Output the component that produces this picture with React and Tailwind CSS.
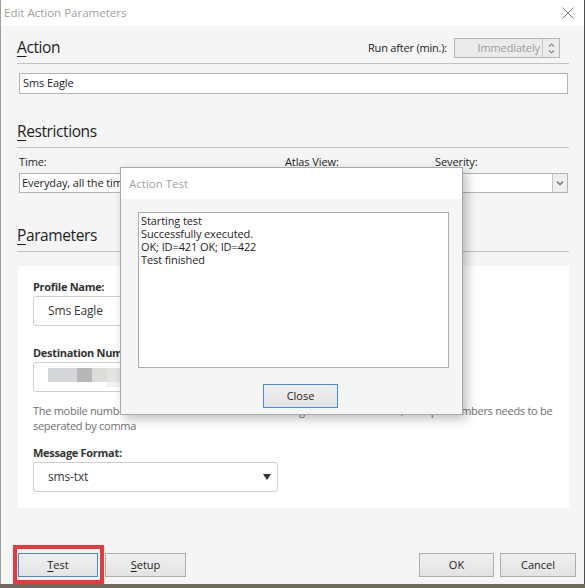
import React from "react";

const font = "font-['Open_Sans','Noto_Sans',sans-serif]";

function Heading({ first, rest, right }) {
  return (
    <div className="flex h-[28px] items-start justify-between border-b border-[#c3c3c3]">
      <div className="text-[15.5px] leading-[22px] tracking-[-0.4px] text-[#1e1e1e]">
        <span className="underline decoration-1 underline-offset-[3px]">{first}</span>
        {rest}
      </div>
      {right}
    </div>
  );
}

function SpinBox() {
  return (
    <div className="mr-[9px] mt-[2px] flex items-center gap-[7px]">
      <span className="text-[11px] leading-[20px] tracking-[-0.2px] text-[#1e1e1e]">Run after (min.):</span>
      <div className="flex h-[20px] w-[106px] border border-[#b5b5b5] bg-[#ebebeb]">
        <div className="flex-1 pr-[2px] text-right text-[11px] leading-[18px] tracking-[-0.1px] text-[#9c9c9c]">Immediately</div>
        <div className="flex w-[17px] flex-col items-center justify-center border-l border-[#c8c8c8]">
          <svg width="7" height="13" viewBox="0 0 7 13" fill="none" stroke="#8a8a8a" strokeWidth="1.2">
            <path d="M1 4.5 L3.5 2 L6 4.5" />
            <path d="M1 8.5 L3.5 11 L6 8.5" />
          </svg>
        </div>
      </div>
    </div>
  );
}

function WinButton({ first, rest, w, focused }) {
  return (
    <div
      className={`flex h-[24px] items-center justify-center border bg-gradient-to-b from-[#f0f0f0] to-[#e3e3e3] text-[11px] text-[#1e1e1e] ${w} ${
        focused ? "border-[#3d8ee3]" : "border-[#adadad]"
      }`}
    >
      {first ? <span className="underline decoration-1 underline-offset-[2px]">{first}</span> : null}
      {rest}
    </div>
  );
}

function Field({ children, className = "" }) {
  return (
    <div className={`flex h-[30px] w-[245px] items-center rounded-[3px] border border-[#cfcfcf] bg-white pl-[14px] text-[12px] tracking-[-0.15px] text-[#3a3a3a] ${className}`}>
      {children}
    </div>
  );
}

function Label({ children, className = "" }) {
  return (
    <div className={`text-[11px] font-bold leading-[16px] tracking-[-0.3px] text-[#333] ${className}`}>{children}</div>
  );
}

export default function App() {
  return (
    <div className={`relative h-[588px] w-[585px] overflow-hidden bg-[#6d6a5c] ${font}`}>
      <div className="flex h-[584px] w-[585px] flex-col border-l border-r border-l-[#9d9d9d] border-r-[#4d4d4d]">
        {/* title bar */}
        <div className="flex h-[26px] shrink-0 items-center justify-between bg-white pl-[3px] pr-[10px]">
          <span className="text-[11.5px] text-[#a2a2a2]">Edit Action Parameters</span>
          <svg width="12" height="12" viewBox="0 0 12 12" stroke="#7a7a7a" strokeWidth="1">
            <path d="M0.5 0.5 L11.5 11.5 M11.5 0.5 L0.5 11.5" />
          </svg>
        </div>

        {/* dialog body */}
        <div className="flex flex-1 flex-col bg-[#f5f5f5] pl-[16px] pr-[15px]">
          <div className="mt-[10px]">
            <Heading first="A" rest="ction" right={<SpinBox />} />
          </div>
          <div className="ml-[2px] mr-[1px] mt-[9px] flex h-[21px] items-center border border-[#b4b4b4] bg-white pl-[3px] text-[11px] tracking-[-0.1px] text-[#1e1e1e]">
            Sms Eagle
          </div>

          <div className="mt-[26px]">
            <Heading first="R" rest="estrictions" />
          </div>
          <div className="ml-[2px] mr-[1px] mt-[6px] grid grid-cols-[258px_142px_133px] gap-x-[8px] text-[11px] tracking-[-0.1px] text-[#1e1e1e]">
            <div className="leading-[15px]">Time:</div>
            <div className="leading-[15px]">Atlas View:</div>
            <div className="leading-[15px]">Severity:</div>
            <div className="mt-[4px] flex h-[20px] items-center border border-[#b4b4b4] bg-white pl-[2px]">
              Everyday, all the time
            </div>
            <div className="mt-[4px] h-[20px] border border-[#b4b4b4] bg-white" />
            <div className="mt-[4px] flex h-[20px] border border-[#b4b4b4] bg-white">
              <div className="flex-1" />
              <div className="flex w-[15px] items-center justify-center border-l border-[#c4c4c4] bg-[#efefef]">
                <svg width="8" height="6" viewBox="0 0 8 6" fill="none" stroke="#7c7c7c" strokeWidth="1.6">
                  <path d="M1 1.5 L4 4.5 L7 1.5" />
                </svg>
              </div>
            </div>
          </div>

          <div className="mt-[31px]">
            <Heading first="P" rest="arameters" />
          </div>

          {/* parameters panel */}
          <div className="ml-[1px] mt-[14px] flex flex-col bg-white pb-[16px] pl-[15px] pr-[8px] pt-[13px]">
            <Label>Profile Name:</Label>
            <Field className="mt-[1px]">Sms Eagle</Field>

            <Label className="mt-[19px]">Destination Numbers:</Label>
            <Field className="mt-[1px] pl-[9px]">
              <div className="flex h-[19px] items-start">
                <div className="h-[14px] w-[29px] bg-[#d4d6d7]" />
                <div className="h-[14px] w-[15px] bg-[#b9b6b9]" />
                <div className="h-[14px] w-[15px] bg-[#dcdcda]" />
                <div className="flex h-[19px] w-[15px] flex-col">
                  <div className="h-[14px] bg-[#e6e4e2]" />
                  <div className="h-[5px] bg-[#f1f3f5]" />
                </div>
                <div className="h-[14px] w-[12px] bg-[#a89a92]" />
              </div>
            </Field>

            <div className="mt-[11px] text-[11px] leading-[15px] tracking-[-0.28px] text-[#707070]">
              The mobile number of the handset to which the message must be delivered, multiple numbers needs to be seperated by comma
            </div>

            <Label className="mt-[12px]">Message Format:</Label>
            <div className="mt-[1px] flex h-[30px] w-[245px] items-center justify-between rounded-[3px] border border-[#cfcfcf] bg-white pl-[14px] pr-[6px] text-[12px] tracking-[-0.15px] text-[#3a3a3a]">
              <span>sms-txt</span>
              <svg width="8" height="6" viewBox="0 0 8 6" fill="#333">
                <path d="M0 0 H8 L4 6 Z" />
              </svg>
            </div>
          </div>

          {/* buttons */}
          <div className="-mr-[7px] ml-[1px] mt-[45px] flex items-center justify-between">
            <div className="flex gap-[7px]">
              <WinButton first="T" rest="est" w="w-[80px]" focused />
              <WinButton first="S" rest="etup" w="w-[81px]" />
            </div>
            <div className="flex gap-[6px]">
              <WinButton rest="OK" w="w-[75px]" />
              <WinButton rest="Cancel" w="w-[76px]" />
            </div>
          </div>
        </div>
      </div>

      {/* highlight around the Test button */}
      <div className="absolute left-[13px] top-[545px] h-[39px] w-[91px] border-[4px] border-[#e8393c]" />

      {/* Action Test dialog */}
      <div className="absolute left-[120px] top-[167px] flex h-[248px] w-[343px] flex-col border border-[#a9a9a9] bg-[#f5f5f5] shadow-[4px_4px_10px_rgba(0,0,0,0.25)]">
        <div className="flex h-[31px] shrink-0 items-center bg-white pl-[8px] text-[11.5px] text-[#a2a2a2]">Action Test</div>
        <div className="ml-[17px] mt-[13px] h-[156px] w-[311px] border border-[#adadad] bg-white pl-[2px] pt-[1px] text-[11px] leading-[13px] tracking-[-0.1px] text-[#1e1e1e]">
          <div>Starting test</div>
          <div>Successfully executed.</div>
          <div>OK; ID=421 OK; ID=422</div>
          <div>Test finished</div>
        </div>
        <div className="ml-[142px] mt-[16px] flex h-[24px] w-[75px] items-center justify-center border border-[#3d8ee3] bg-gradient-to-b from-[#f0f0f0] to-[#e3e3e3] text-[11px] text-[#1e1e1e]">
          Close
        </div>
      </div>
    </div>
  );
}
